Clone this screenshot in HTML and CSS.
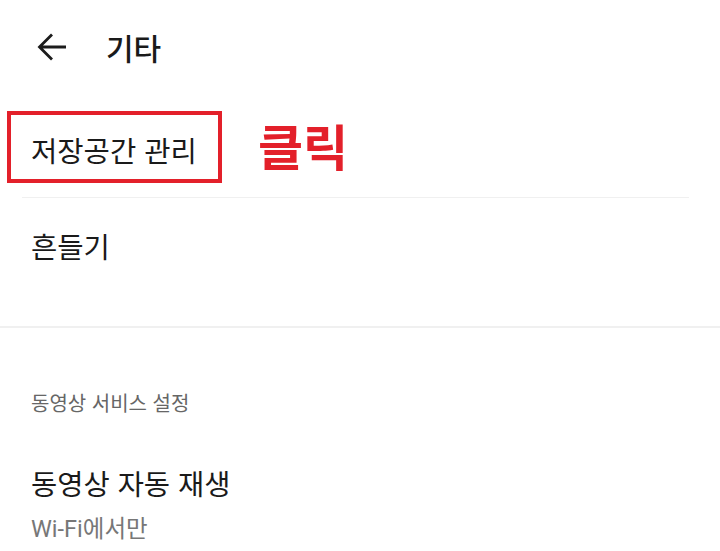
FILE: index.html
```html
<!DOCTYPE html>
<html lang="ko">
<head>
<meta charset="utf-8">
<link rel="stylesheet" href="styles.css">
</head>
<body>
<div class="page">
  <header class="appbar">
    <span class="back">
      <svg width="32" height="32" viewBox="0 0 32 32"><path d="M30 16H4M16 3.5L3.5 16L16 28.5" fill="none" stroke="#1c1c1c" stroke-width="2.8"/></svg>
    </span>
    <h1 class="title">기타</h1>
  </header>
  <div class="group">
    <div class="row row-storage">
      <span class="label">저장공간 관리</span>
      <span class="mark-box"></span>
      <span class="mark-text">클릭</span>
    </div>
    <div class="divider"></div>
    <div class="row row-shake">
      <span class="label">흔들기</span>
    </div>
  </div>
  <div class="section-sep"></div>
  <div class="section">
    <div class="section-title">동영상 서비스 설정</div>
    <div class="item">
      <div class="item-title">동영상 자동 재생</div>
      <div class="item-sub">Wi-Fi에서만</div>
    </div>
  </div>
</div>
</body>
</html>
```
FILE: styles.css
```css
html, body {
  margin: 0;
  padding: 0;
  background: #ffffff;
}
.page {
  width: 720px;
  height: 551px;
  overflow: hidden;
  font-family: "Noto Sans CJK KR", "Noto Sans", sans-serif;
  color: #1a1a1a;
}
.appbar {
  height: 94px;
  display: flex;
  align-items: center;
  padding-left: 36px;
}
.back {
  width: 32px;
  height: 32px;
  display: flex;
}
.title {
  margin: 0 0 0 38px;
  font-size: 30px;
  font-weight: 500;
  line-height: 1;
}
.group {
  padding-top: 10px;
}
.row {
  display: flex;
  align-items: center;
  padding-left: 31px;
  height: 93px;
}
.row-storage {
  position: relative;
}
.label {
  font-size: 28.6px;
  font-weight: 400;
  line-height: 1;
}
.mark-box {
  position: absolute;
  left: 7px;
  top: 7px;
  width: 207px;
  height: 64px;
  border: 4px solid #e3202a;
}
.mark-text {
  position: absolute;
  left: 258px;
  top: 16px;
  font-size: 49px;
  font-weight: 700;
  line-height: 1;
  color: #e3202a;
}
.divider {
  height: 1px;
  background: #f0f0f0;
  margin: 0 31px 0 22px;
}
.row-shake {
  height: 96px;
  margin-bottom: 32px;
}
.section-sep {
  height: 2px;
  background: #f0f0f0;
}
.section {
  padding-left: 31px;
}
.section-title {
  margin-top: 65px;
  font-size: 20px;
  line-height: 20px;
  color: #666666;
}
.item {
  margin-top: 55px;
}
.item-title {
  font-size: 28.5px;
  line-height: 30px;
  font-weight: 400;
  color: #1a1a1a;
}
.item-sub {
  margin-top: 18px;
  font-size: 23.5px;
  line-height: 26px;
  color: #777777;
  font-family: "Roboto", "Noto Sans CJK KR", sans-serif;
}
```
